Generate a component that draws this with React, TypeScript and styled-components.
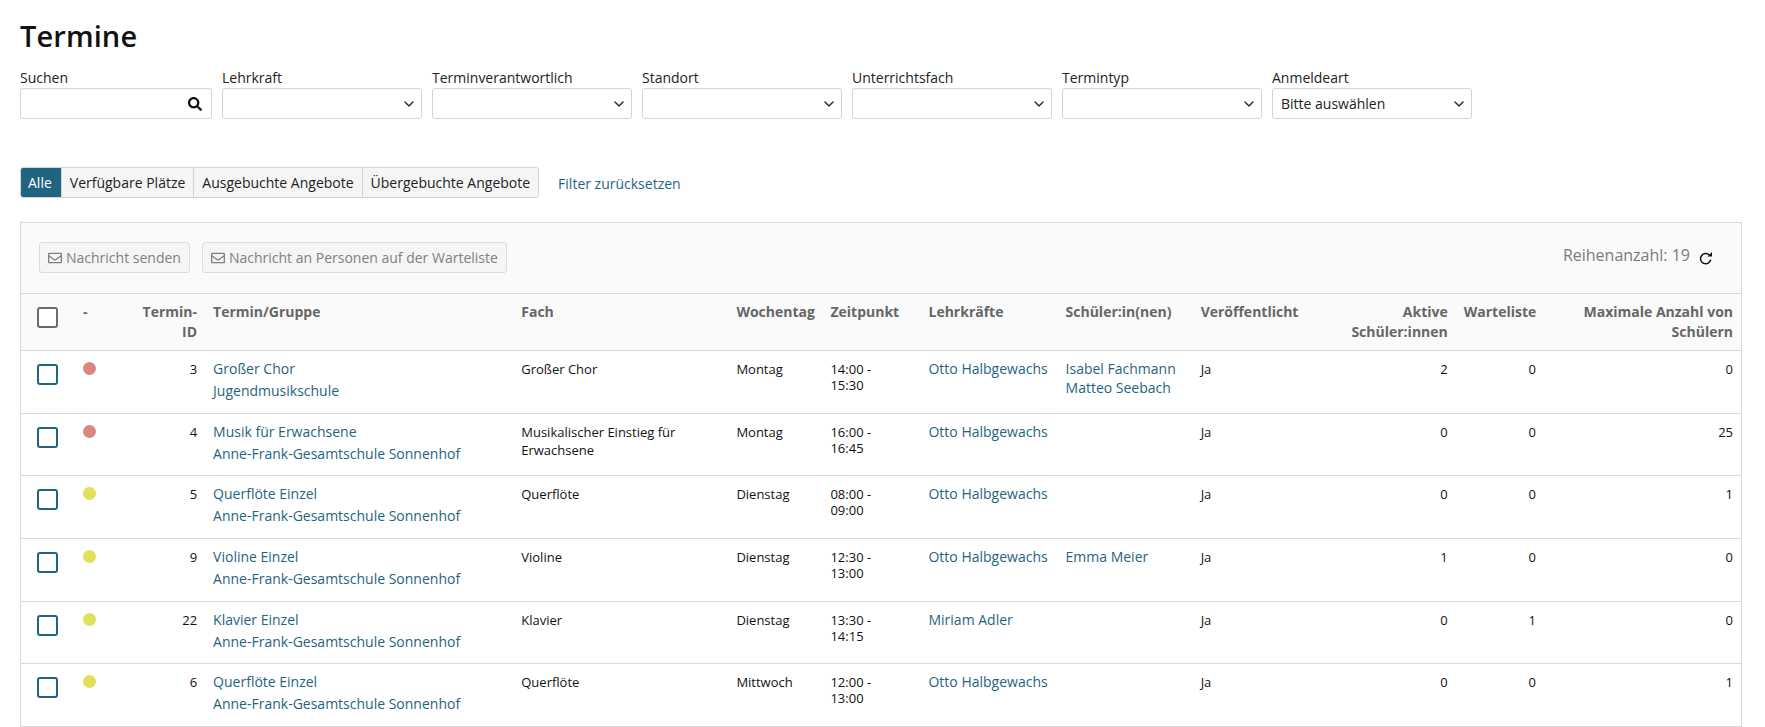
import React from 'react';
import styled, { createGlobalStyle } from 'styled-components';
import { ChevronDown } from 'lucide-react';
import { FaRegEnvelope, FaSearch } from 'react-icons/fa';

const LINK = '#1f6480';
const BORDER = '#d9d9d9';

const GlobalStyle = createGlobalStyle`
  html, body {
    margin: 0;
    padding: 0;
    background: #fff;
    font-family: "Open Sans", sans-serif;
    font-size: 14px;
    color: #111;
  }
`;

const Page = styled.div`
  padding: 19px 23px 0 20px;
`;

const Title = styled.h1`
  margin: 0;
  font-size: 29px;
  line-height: 34px;
  font-weight: 600;
  letter-spacing: 0.1px;
  color: #111;
`;

const Filters = styled.div`
  display: flex;
  gap: 10px;
  margin-top: 15px;
`;

const Filter = styled.div<{ $width: number }>`
  width: ${(p) => p.$width}px;
`;

const FilterLabel = styled.label`
  display: block;
  font-size: 14px;
  line-height: 19px;
  color: #222;
  margin-bottom: 1px;
`;

const Field = styled.div`
  height: 29px;
  border: 1px solid #d4d4d4;
  border-radius: 3px;
  display: flex;
  align-items: center;
  padding: 0 4px 0 8px;
  font-size: 14px;
  color: #222;
  background: #fff;
  svg {
    margin-left: auto;
  }
`;

const SearchField = styled(Field)`
  padding-right: 9px;
`;

const TabRow = styled.div`
  display: flex;
  align-items: center;
  margin-top: 48px;
`;

const Tabs = styled.div`
  display: flex;
  height: 29px;
  border: 1px solid #d4d4d4;
  border-radius: 3px;
  background: #f5f5f5;
  overflow: hidden;
`;

const Tab = styled.div<{ $active?: boolean }>`
  display: flex;
  align-items: center;
  padding: ${(p) => (p.$active ? '0 9px 0 8px' : '0 8px')};
  font-size: 14px;
  color: ${(p) => (p.$active ? '#fff' : '#222')};
  background: ${(p) => (p.$active ? LINK : 'transparent')};
  margin: ${(p) => (p.$active ? '-1px 0 -1px -1px' : '0')};
  & + & {
    border-left: 1px solid #d4d4d4;
  }
`;

const ResetLink = styled.a`
  margin: 2px 0 0 19px;
  font-size: 14px;
  color: ${LINK};
`;

const Panel = styled.div`
  margin-top: 24px;
  border: 1px solid ${BORDER};
  border-bottom: none;
`;

const Toolbar = styled.div`
  box-sizing: border-box;
  height: 70px;
  background: #fafafa;
  display: flex;
  align-items: center;
  padding: 0 28px 1px 18px;
  gap: 12px;
`;

const ActionButton = styled.div`
  height: 29px;
  display: flex;
  align-items: center;
  gap: 4px;
  padding: 0 8px;
  border: 1px solid #dcdcdc;
  border-radius: 3px;
  font-size: 14px;
  color: #808080;
  background: #f5f5f5;
`;

const RowCount = styled.div`
  margin-left: auto;
  display: flex;
  align-items: center;
  gap: 9px;
  color: #7a7a7a;
`;

const RowCountText = styled.span`
  font-size: 16px;
  padding-bottom: 6px;
`;

const Table = styled.table`
  width: 100%;
  table-layout: fixed;
  border-collapse: collapse;
`;

const HeadRow = styled.tr`
  background: #fafafa;
  border-top: 1px solid ${BORDER};
`;

const Th = styled.th<{ $right?: boolean }>`
  padding: 8px;
  height: 40px;
  vertical-align: top;
  text-align: ${(p) => (p.$right ? 'right' : 'left')};
  font-size: 14px;
  line-height: 20px;
  font-weight: 700;
  color: #666;
`;

const Row = styled.tr`
  border-top: 1px solid ${BORDER};
  border-bottom: 1px solid ${BORDER};
`;

const Td = styled.td<{ $right?: boolean }>`
  box-sizing: border-box;
  padding: 9px 8px 0;
  height: 62.67px;
  vertical-align: top;
  text-align: ${(p) => (p.$right ? 'right' : 'left')};
  font-size: 13px;
  line-height: 18px;
  color: #111;
`;

const TermCell = styled(Td)`
  padding-top: 7px;
`;

const PersonCell = styled(Td)`
  padding-top: 8px;
`;

const IconCell = styled(Td)`
  padding-top: 0;
`;

const TermLink = styled.a`
  display: block;
  font-size: 14px;
  line-height: 22px;
  color: ${LINK};
`;

const PersonLink = styled.a`
  display: block;
  font-size: 14px;
  line-height: 19px;
  color: ${LINK};
`;

const TimeText = styled.span`
  display: block;
  max-width: 60px;
  margin-top: 1px;
  line-height: 16px;
`;

const Box = styled.span<{ $head?: boolean }>`
  display: block;
  box-sizing: border-box;
  width: 21px;
  height: 21px;
  margin: ${(p) => (p.$head ? '5px 0 0 8px' : '13px 0 0 8px')};
  border: 2px solid ${(p) => (p.$head ? '#6b6b6b' : LINK)};
  border-radius: 3px;
  background: #fff;
`;

const Dot = styled.span<{ $color: string }>`
  display: block;
  width: 13px;
  height: 13px;
  margin-top: 11px;
  border-radius: 50%;
  background: ${(p) => p.$color};
`;

const RED = '#db8686';
const YELLOW = '#e0e05c';

const columns = [54, 51, 79, 308, 215, 94, 98, 137, 135, 125, 138, 88, 197];

type Entry = {
  dot: string;
  id: number;
  name: string;
  school: string;
  subject: string;
  day: string;
  time: string;
  teacher: string;
  students: string[];
  active: number;
  waiting: number;
  max: number;
};

const SONNENHOF = 'Anne-Frank-Gesamtschule Sonnenhof';

const entries: Entry[] = [
  { dot: RED, id: 3, name: 'Großer Chor', school: 'Jugendmusikschule', subject: 'Großer Chor', day: 'Montag', time: '14:00 - 15:30', teacher: 'Otto Halbgewachs', students: ['Isabel Fachmann', 'Matteo Seebach'], active: 2, waiting: 0, max: 0 },
  { dot: RED, id: 4, name: 'Musik für Erwachsene', school: SONNENHOF, subject: 'Musikalischer Einstieg für Erwachsene', day: 'Montag', time: '16:00 - 16:45', teacher: 'Otto Halbgewachs', students: [], active: 0, waiting: 0, max: 25 },
  { dot: YELLOW, id: 5, name: 'Querflöte Einzel', school: SONNENHOF, subject: 'Querflöte', day: 'Dienstag', time: '08:00 - 09:00', teacher: 'Otto Halbgewachs', students: [], active: 0, waiting: 0, max: 1 },
  { dot: YELLOW, id: 9, name: 'Violine Einzel', school: SONNENHOF, subject: 'Violine', day: 'Dienstag', time: '12:30 - 13:00', teacher: 'Otto Halbgewachs', students: ['Emma Meier'], active: 1, waiting: 0, max: 0 },
  { dot: YELLOW, id: 22, name: 'Klavier Einzel', school: SONNENHOF, subject: 'Klavier', day: 'Dienstag', time: '13:30 - 14:15', teacher: 'Miriam Adler', students: [], active: 0, waiting: 1, max: 0 },
  { dot: YELLOW, id: 6, name: 'Querflöte Einzel', school: SONNENHOF, subject: 'Querflöte', day: 'Mittwoch', time: '12:00 - 13:00', teacher: 'Otto Halbgewachs', students: [], active: 0, waiting: 0, max: 1 },
];

const selects: [string, string, number][] = [
  ['Lehrkraft', '', 200],
  ['Terminverantwortlich', '', 200],
  ['Standort', '', 200],
  ['Unterrichtsfach', '', 200],
  ['Termintyp', '', 200],
  ['Anmeldeart', 'Bitte auswählen', 200],
];

function RefreshIcon() {
  return (
    <svg width="14" height="14" viewBox="0 0 14 14" fill="none">
      <path d="M10.4 4.2A5.1 5.1 0 1 0 11.7 8.6" stroke="#111" strokeWidth="1.5" />
      <path d="M13 1v4.4H8.6z" fill="#111" />
    </svg>
  );
}

export default function App() {
  return (
    <Page>
      <GlobalStyle />
      <Title>Termine</Title>
      <Filters>
        <Filter $width={192}>
          <FilterLabel>Suchen</FilterLabel>
          <SearchField>
            <FaSearch size={14} color="#111" />
          </SearchField>
        </Filter>
        {selects.map(([label, value, width]) => (
          <Filter key={label} $width={width}>
            <FilterLabel>{label}</FilterLabel>
            <Field>
              {value}
              <ChevronDown size={16} strokeWidth={2} color="#222" />
            </Field>
          </Filter>
        ))}
      </Filters>
      <TabRow>
        <Tabs>
          <Tab $active>Alle</Tab>
          <Tab>Verfügbare Plätze</Tab>
          <Tab>Ausgebuchte Angebote</Tab>
          <Tab>Übergebuchte Angebote</Tab>
        </Tabs>
        <ResetLink>Filter zurücksetzen</ResetLink>
      </TabRow>
      <Panel>
        <Toolbar>
          <ActionButton>
            <FaRegEnvelope size={14} />
            Nachricht senden
          </ActionButton>
          <ActionButton>
            <FaRegEnvelope size={14} />
            Nachricht an Personen auf der Warteliste
          </ActionButton>
          <RowCount>
            <RowCountText>Reihenanzahl: 19</RowCountText>
            <RefreshIcon />
          </RowCount>
        </Toolbar>
        <Table>
          <colgroup>
            {columns.map((width, i) => (
              <col key={i} style={{ width }} />
            ))}
          </colgroup>
          <thead>
            <HeadRow>
              <Th><Box $head /></Th>
              <Th>-</Th>
              <Th $right>Termin-ID</Th>
              <Th>Termin/Gruppe</Th>
              <Th>Fach</Th>
              <Th>Wochentag</Th>
              <Th>Zeitpunkt</Th>
              <Th>Lehrkräfte</Th>
              <Th>Schüler:in(nen)</Th>
              <Th>Veröffentlicht</Th>
              <Th $right>Aktive Schüler:innen</Th>
              <Th $right>Warteliste</Th>
              <Th $right>Maximale Anzahl von Schülern</Th>
            </HeadRow>
          </thead>
          <tbody>
            {entries.map((e) => (
              <Row key={e.id}>
                <IconCell><Box /></IconCell>
                <IconCell><Dot $color={e.dot} /></IconCell>
                <Td $right>{e.id}</Td>
                <TermCell>
                  <TermLink>{e.name}</TermLink>
                  <TermLink>{e.school}</TermLink>
                </TermCell>
                <Td>{e.subject}</Td>
                <Td>{e.day}</Td>
                <Td><TimeText>{e.time}</TimeText></Td>
                <PersonCell><PersonLink>{e.teacher}</PersonLink></PersonCell>
                <PersonCell>
                  {e.students.map((s) => (
                    <PersonLink key={s}>{s}</PersonLink>
                  ))}
                </PersonCell>
                <Td>Ja</Td>
                <Td $right>{e.active}</Td>
                <Td $right>{e.waiting}</Td>
                <Td $right>{e.max}</Td>
              </Row>
            ))}
          </tbody>
        </Table>
      </Panel>
    </Page>
  );
}
